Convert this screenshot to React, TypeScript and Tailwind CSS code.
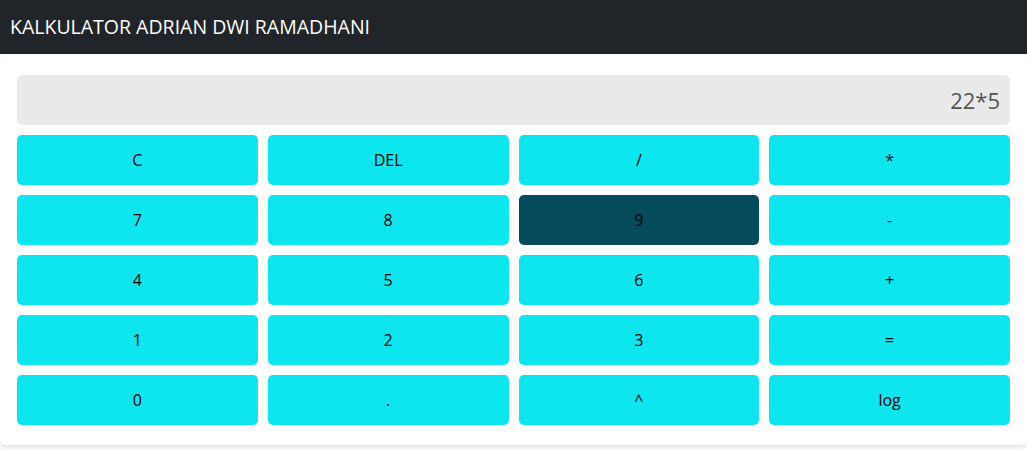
import React from 'react';

const keys = ['C', 'DEL', '/', '*', '7', '8', '9', '-', '4', '5', '6', '+', '1', '2', '3', '=', '0', '.', '^', 'log'];

const App = () => {
  const active = '9';
  return (
    <div className="min-h-[450px] bg-white font-['Open_Sans','Noto_Sans',sans-serif]">
      <header className="h-[54px] bg-[#212529] flex items-center px-[10px]">
        <h1 className="text-white text-[19.5px]">KALKULATOR ADRIAN DWI RAMADHANI</h1>
      </header>
      <div className="rounded-[6px] bg-white shadow-[0_2px_6px_rgba(0,0,0,0.15)] px-[17px] pt-[20px] pb-[20px] mt-px">
        <div className="h-[50px] rounded-[5px] bg-[#e9e9e9] flex items-center justify-end pr-[10px] text-[22px] text-[#555]">
          22*5
        </div>
        <div className="grid grid-cols-4 gap-[10px] mt-[10px]">
          {keys.map((k) => (
            <button
              key={k}
              className={`h-[50px] rounded-[5px] text-[16px] text-black ${
                k === active ? 'bg-[#054b5c]' : 'bg-[#0de6ef]'
              }`}
            >
              {k}
            </button>
          ))}
        </div>
      </div>
    </div>
  );
};

export default App;
